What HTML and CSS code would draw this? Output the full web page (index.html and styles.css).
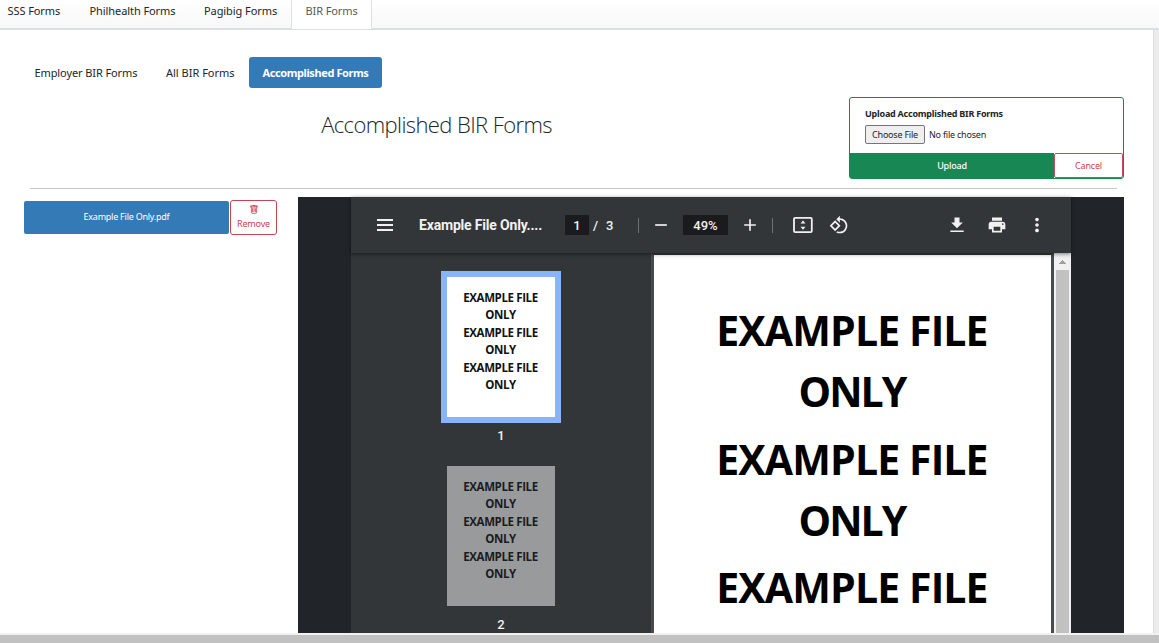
FILE: index.html
```
<!DOCTYPE html>
<html lang="en">
<head>
<meta charset="utf-8">
<title>BIR Forms</title>
<link rel="stylesheet" href="styles.css">
</head>
<body>
<div class="app">
  <nav class="tabs">
    <a class="tab"><span class="t t-sss">SSS Forms</span></a>
    <a class="tab"><span class="t t-phil">Philhealth Forms</span></a>
    <a class="tab"><span class="t t-pag">Pagibig Forms</span></a>
    <a class="tab active"><span class="t t-bir">BIR Forms</span></a>
  </nav>
  <main class="card">
    <nav class="pills">
      <a class="pill pill-employer">Employer BIR Forms</a>
      <a class="pill pill-all">All BIR Forms</a>
      <a class="pill selected">Accomplished Forms</a>
    </nav>
    <header class="head">
      <h1>Accomplished BIR Forms</h1>
      <form class="upload">
        <div class="upload-body">
          <label class="upload-label">Upload Accomplished BIR Forms</label>
          <div class="file"><span class="choose">Choose File</span><span class="none">No file chosen</span></div>
        </div>
        <div class="actions"><span class="submit">Upload</span><span class="cancel">Cancel</span></div>
      </form>
    </header>
    <div class="rule"></div>
    <div class="content">
      <aside class="files">
        <a class="filename">Example File Only.pdf</a>
        <a class="remove">
          <svg width="10" height="10" viewBox="0 0 16 16" fill="currentColor" stroke="currentColor" stroke-width=".4"><path d="M5.500 5.500a.5.5 0 0 1 .5.5v6a.5.5 0 0 1-1 0V6a.5.5 0 0 1 .5-.5m2.500 0a.5.5 0 0 1 .5.5v6a.5.5 0 0 1-1 0V6a.5.5 0 0 1 .5-.5m3 .5a.5.5 0 0 0-1 0v6a.5.5 0 0 0 1 0z"/><path d="M14.500 3a1 1 0 0 1-1 1H13v9a2 2 0 0 1-2 2H5a2 2 0 0 1-2-2V4h-.5a1 1 0 0 1-1-1V2a1 1 0 0 1 1-1H6a1 1 0 0 1 1-1h2a1 1 0 0 1 1 1h3.500a1 1 0 0 1 1 1zM4.118 4 4 4.059V13a1 1 0 0 0 1 1h6a1 1 0 0 0 1-1V4.059L11.882 4zM2.500 3h11V2h-11z"/></svg>
          <span>Remove</span>
        </a>
      </aside>
      <section class="frame">
        <div class="viewer">
          <div class="toolbar">
            <svg class="menu" width="24" height="24" viewBox="0 0 24 24" fill="currentColor"><path d="M4 6h16v2H4zm0 5h16v2H4zm0 5h16v2H4z"/></svg>
            <span class="title">Example File Only....</span>
            <span class="pageno">1</span><span class="total"><span>/</span><span>3</span></span>
            <i class="sep"></i>
            <svg class="minus" width="20" height="20" viewBox="0 0 24 24" fill="currentColor"><path d="M5 11h14v2H5z"/></svg>
            <span class="zoom">49%</span>
            <svg class="plus" width="20" height="20" viewBox="0 0 24 24" fill="currentColor"><path d="M19 13h-6v6h-2v-6H5v-2h6V5h2v6h6z"/></svg>
            <i class="sep sep2"></i>
            <svg class="fit" width="20" height="20" viewBox="0 0 20 20"><rect x="1" y="2.900" width="17.800" height="14.200" rx="1.200" fill="none" stroke="currentColor" stroke-width="1.800"/><path d="M10 5.500l2.500 3h-5zM10 14.800l2.500-3h-5z" fill="currentColor"/></svg>
            <svg class="rotate" width="20" height="20" viewBox="0 0 24 24" fill="currentColor"><path d="M7.340 6.410L.86 12.900l6.490 6.480 6.490-6.480-6.500-6.490zM3.690 12.900l3.660-3.660L11 12.900l-3.660 3.660-3.650-3.660zm15.670-6.260C17.610 4.880 15.300 4 13 4V.76L8.760 5 13 9.240V6c1.790 0 3.580.68 4.950 2.050 2.730 2.730 2.730 7.170 0 9.900C16.580 19.320 14.790 20 13 20c-.97 0-1.940-.21-2.840-.61l-1.490 1.490C10.020 21.620 11.510 22 13 22c2.300 0 4.610-.88 6.360-2.640 3.520-3.510 3.520-9.210 0-12.720z"/></svg>
            <span class="tools">
              <svg width="20" height="20" viewBox="0 0 24 24" fill="currentColor"><path d="M19 9h-4V3H9v6H5l7 7 7-7zM4 18.500v2h16v-2z"/></svg>
              <svg width="20" height="20" viewBox="0 0 24 24" fill="currentColor"><path d="M19 8H5c-1.660 0-3 1.340-3 3v6h4v4h12v-4h4v-6c0-1.660-1.340-3-3-3zm-3 11H8v-5h8v5zm3-7c-.55 0-1-.45-1-1s.45-1 1-1 1 .45 1 1-.45 1-1 1zm-1-9H6v4h12V3z"/></svg>
              <svg width="20" height="20" viewBox="0 0 24 24" fill="currentColor"><circle cx="12" cy="5.500" r="2.200"/><circle cx="12" cy="12" r="2.200"/><circle cx="12" cy="18.500" r="2.200"/></svg>
            </span>
          </div>
          <div class="panes">
            <div class="thumbs">
              <div class="thumb current"><p>EXAMPLE FILE<br>ONLY</p><p>EXAMPLE FILE<br>ONLY</p><p>EXAMPLE FILE<br>ONLY</p></div>
              <span class="num">1</span>
              <div class="thumb dim"><p>EXAMPLE FILE<br>ONLY</p><p>EXAMPLE FILE<br>ONLY</p><p>EXAMPLE FILE<br>ONLY</p></div>
              <span class="num">2</span>
            </div>
            <div class="page"><p>EXAMPLE FILE<br><span class="tight">ONLY</span></p><p>EXAMPLE FILE<br><span class="tight">ONLY</span></p><p>EXAMPLE FILE</p></div>
            <div class="vscroll">
              <svg width="17" height="17" viewBox="0 0 17 17" shape-rendering="crispEdges"><path d="M5 11h7L8.500 7z" fill="#a0a0a0"/></svg>
              <div class="vthumb"></div>
            </div>
          </div>
        </div>
      </section>
    </div>
  </main>
  <div class="hscroll"></div>
</div>
</body>
</html>
```
FILE: styles.css
```
* { box-sizing: border-box; }
body {
  margin: 0;
  font-family: "Noto Sans", "Open Sans", sans-serif;
  font-size: 11px;
  color: #212529;
  background: #ececec;
}
.app { display: flex; flex-direction: column; height: 643px; overflow: hidden; }

.tabs {
  display: flex;
  flex: none;
  height: 30px;
  background: linear-gradient(#fff, #f8f8f8);
  border-bottom: 2px solid #dcdfe2;
}
.tab { display: flex; line-height: 22px; white-space: nowrap; }
.tab .t { padding-left: 7.500px; width: 82px; letter-spacing: -.08px; }
.tab .t-phil { width: 115px; }
.tab .t-pag { width: 94px; padding-left: 7px; }
.tab.active {
  height: 29px;
  background: #fff;
  border: solid #dee2e6;
  border-width: 0 1px;
  color: #555b60;
}
.tab .t-bir { padding-left: 13.500px; width: 79px; letter-spacing: -.1px; }

.card {
  flex: 1;
  min-height: 0;
  width: 1154px;
  background: #fff;
  border-right: 1px solid #dcdcdc;
  overflow: hidden;
}
.pills { display: flex; padding: 27px 0 0 34px; line-height: 31px; white-space: nowrap; }
.pill-employer { width: 132px; padding-left: .5px; letter-spacing: -.1px; }
.pill-all { width: 83px; }
.selected {
  width: 133px;
  height: 31px;
  border-radius: 3px;
  background: #337ab7;
  color: #fff;
  font-weight: 700;
  text-align: center;
  letter-spacing: -.4px;
}
.head { display: flex; padding: 9px 0 0 24px; height: 100px; }
h1 {
  width: 825px;
  margin: 12px 0 0;
  text-align: center;
  font: 300 22px/30px "Open Sans", "Noto Sans", sans-serif;
  letter-spacing: -.6px;
}
.upload {
  width: 275px;
  height: 82px;
  border: 1px solid #198754;
  border-radius: 3px;
  font-size: 9px;
}
.upload-body { height: 55px; padding: 9px 0 0 15px; }
.upload-label { display: block; line-height: 14px; font-weight: 700; letter-spacing: -.23px; }
.file { display: flex; align-items: center; margin-top: 4px; letter-spacing: -.22px; }
.choose {
  width: 60px;
  height: 19px;
  border: 1px solid #767676;
  border-radius: 2px;
  background: #efefef;
  line-height: 17px;
  text-align: center;
}
.none { margin-left: 4px; }
.actions { display: flex; height: 25px; line-height: 25px; text-align: center; letter-spacing: -.2px; }
.submit { flex: 1; background: #198754; color: #fff; font-weight: 500; }
.cancel { width: 69px; line-height: 23px; border: 1px solid #c0505b; border-radius: 2px; color: #cc3f4c; }
.rule { height: 1px; margin: 0 36px 8px 30px; background: #c8c9ca; }

.content { display: flex; height: 436px; padding-left: 24px; }
.files { display: flex; gap: 1px; width: 274px; padding-top: 3px; font-size: 9px; text-align: center; }
.filename {
  width: 205px;
  height: 33px;
  margin-top: 1px;
  border-radius: 2px;
  background: #337ab7;
  color: #fff;
  line-height: 32px;
  letter-spacing: -.24px;
}
.remove {
  display: flex;
  flex-direction: column;
  align-items: center;
  width: 47px;
  height: 35px;
  padding-top: 4px;
  border: 1px solid #c64450;
  border-radius: 3px;
  color: #cc3f4c;
  line-height: 20px;
  letter-spacing: -.2px;
}
.frame { width: 826px; padding-left: 53px; background: #212529; }
.viewer { width: 720px; height: 100%; background: #323639; color: #f1f1f1; font-family: Roboto, sans-serif; }
.toolbar {
  position: relative;
  display: flex;
  align-items: center;
  height: 56px;
  padding-left: 22px;
  box-shadow: 0 1px 4px rgba(0, 0, 0, .5);
  background: #323639;
  font-size: 13px;
  font-weight: 500;
}
.toolbar svg { flex: none; }
.title { width: 124px; margin-left: 22px; font-size: 14px; font-weight: 700; white-space: nowrap; letter-spacing: -.18px; }
.pageno { width: 24px; height: 20px; margin-left: 22px; background: #191b1c; line-height: 21px; text-align: center; }
.total { display: flex; gap: 8px; width: 21px; margin-left: 4px; }
.sep { width: 1px; height: 15px; margin-left: 24px; background: #6d7072; }
.minus { margin-left: 12px; }
.zoom { width: 45px; height: 20px; margin-left: 12px; background: #191b1c; line-height: 21px; text-align: center; }
.plus { margin-left: 12px; }
.sep2 { margin-left: 12px; }
.fit { margin-left: 20px; }
.rotate { margin-left: 16px; }
.tools { display: flex; gap: 20px; margin-left: 98px; }

.panes { display: flex; height: 380px; }
.thumbs { display: flex; flex-direction: column; align-items: center; width: 300px; padding-top: 18px; }
p { margin: 0; }
.thumb {
  flex: none;
  width: 108px;
  height: 140px;
  padding: 12px 1px 0 0;
  background: #fff;
  color: #111;
  font: 700 11.5px/17px "Open Sans", "Noto Sans", sans-serif;
  text-align: center;
  white-space: nowrap;
}
.thumb p { height: 35px; letter-spacing: -.38px; }
.current { width: 120px; height: 152px; border: 6px solid #8ab4f8; }
.dim { margin-top: 24px; background: #999a9c; color: #1b1c1e; }
.num { height: 13px; margin-top: 6px; font-size: 13px; font-weight: 500; line-height: 14px; }
.dim + .num { margin-top: 12px; }
.page {
  width: 403px;
  padding: 45px 1px 0 0;
  border: solid #4a4b4d;
  border-width: 2px 3px 0;
  border-top-color: #323639;
  background: #fff;
  color: #000;
  font: 700 41px/61px "Open Sans", "Noto Sans", sans-serif;
  text-align: center;
  white-space: nowrap;
}
.page p { height: 128.500px; letter-spacing: -.88px; }
.tight { letter-spacing: -1.900px; }
.vscroll { display: flex; flex-direction: column; align-items: center; width: 17px; background: #f1f1f1; }
.vthumb { flex: 1; width: 13px; background: #c1c1c1; }
.hscroll { flex: none; height: 10px; border-top: 2px solid #f1f1f1; background: #c1c1c1; }
```
